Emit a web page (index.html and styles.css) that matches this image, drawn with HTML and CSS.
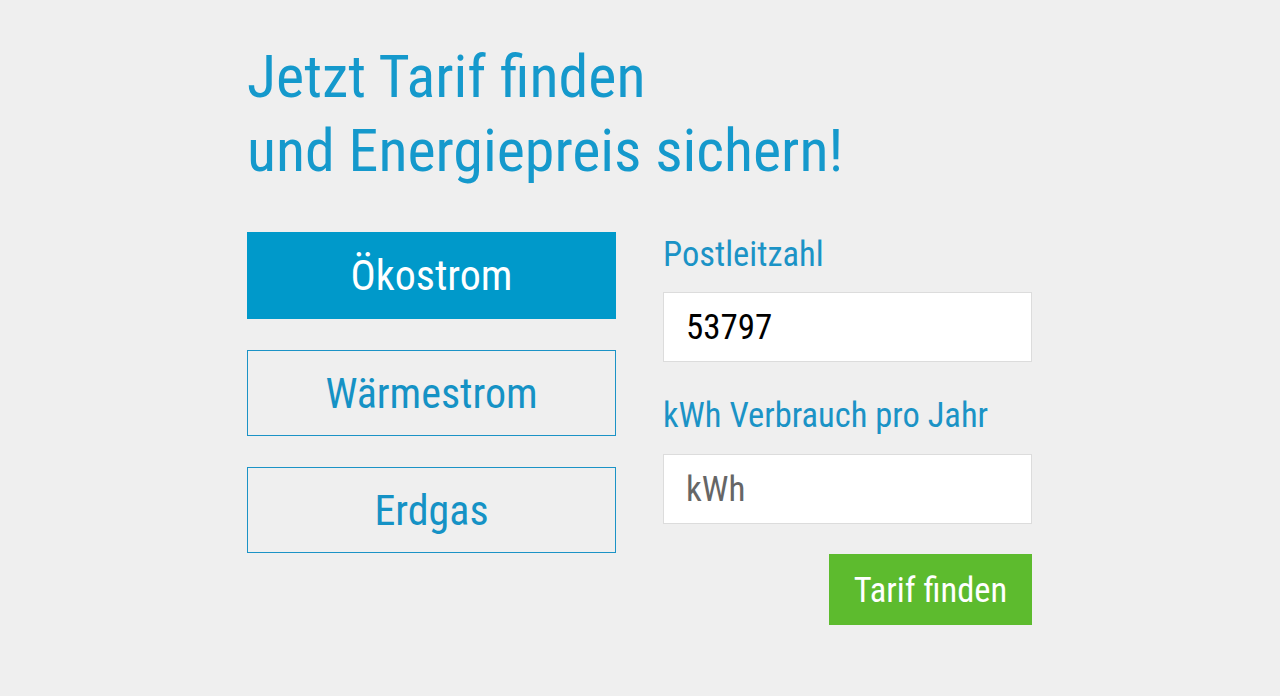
FILE: index.html
```html
<!DOCTYPE html>
<html lang="de">
<head>
<meta charset="utf-8">
<title>Tarifrechner</title>
<link rel="stylesheet" href="styles.css">
</head>
<body>
<main class="wrap">
  <h1 class="title">Jetzt Tarif finden<br>und Energiepreis sichern!</h1>
  <div class="form">
    <div class="types">
      <button class="type active" type="button">Ökostrom</button>
      <button class="type" type="button">Wärmestrom</button>
      <button class="type" type="button">Erdgas</button>
    </div>
    <div class="fields">
      <label class="label label-first" for="plz">Postleitzahl</label>
      <input class="input" id="plz" type="text" value="53797">
      <label class="label label-second" for="kwh">kWh Verbrauch pro Jahr</label>
      <input class="input" id="kwh" type="text" placeholder="kWh">
      <button class="submit" type="button">Tarif finden</button>
    </div>
  </div>
</main>
</body>
</html>
```
FILE: styles.css
```css
html, body {
  margin: 0;
  padding: 0;
  background: #efefef;
}
body {
  font-family: "Roboto Condensed", Roboto, "Liberation Sans", sans-serif;
  font-stretch: condensed;
}
.wrap {
  box-sizing: border-box;
  width: 786px;
  margin: 0 auto;
  padding: 40px 1px 0 0;
}
.title {
  margin: 0;
  font-weight: 400;
  font-size: 60px;
  line-height: 74px;
  color: #1599cc;
  font-stretch: condensed;
}
.form {
  display: flex;
  gap: 47px;
  margin-top: 44px;
}
.types {
  width: 369px;
  display: flex;
  flex-direction: column;
  gap: 31px;
}
.type {
  height: 86px;
  box-sizing: border-box;
  border: 1px solid #1b93c6;
  background: transparent;
  color: #1592c5;
  font-family: inherit;
  font-stretch: condensed;
  font-size: 42px;
  padding: 0;
  cursor: pointer;
}
.type.active {
  height: 87px;
  background: #0099ca;
  border-color: #0099ca;
  color: #ffffff;
}
.fields {
  width: 369px;
  display: flex;
  flex-direction: column;
}
.label {
  color: #1b93c6;
  font-size: 34.5px;
  line-height: 40px;
}
.label-first {
  margin-top: 2px;
  margin-bottom: 18px;
}
.label-second {
  margin-top: 33px;
  margin-bottom: 19px;
}
.input {
  height: 70px;
  box-sizing: border-box;
  border: 1px solid #dcdcdc;
  background: #ffffff;
  padding: 0 22px;
  font-family: inherit;
  font-stretch: condensed;
  font-size: 35px;
  color: #000000;
  outline: none;
}
.input::placeholder {
  color: #666666;
  opacity: 1;
}
.submit {
  align-self: flex-end;
  margin-top: 30px;
  width: 203px;
  height: 71px;
  border: 0;
  background: #5dbb2e;
  color: #ffffff;
  font-family: inherit;
  font-stretch: condensed;
  font-size: 34.5px;
  padding: 0;
  cursor: pointer;
}
```
